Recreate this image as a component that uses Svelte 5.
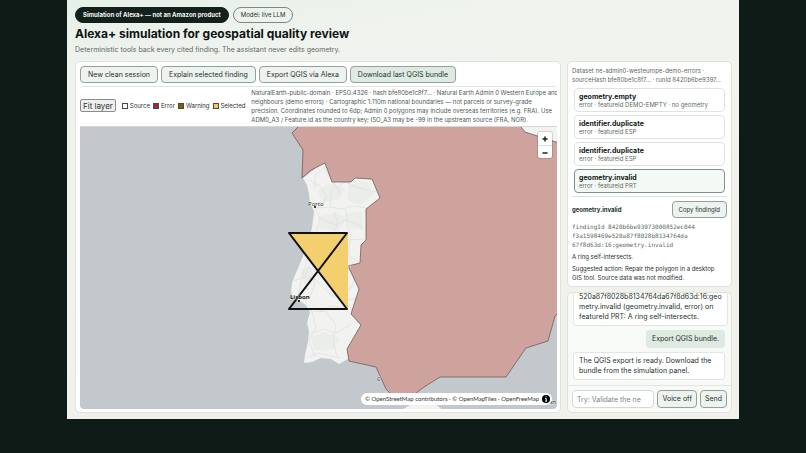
<script>
  const legend = [
    { name: 'Source', color: '#ffffff' },
    { name: 'Error', color: '#a32638' },
    { name: 'Warning', color: '#8a5a00' },
    { name: 'Selected', color: '#f2cc55' }
  ];

  const findings = [
    { rule: 'geometry.empty', detail: 'error · featureId DEMO-EMPTY · no geometry' },
    { rule: 'identifier.duplicate', detail: 'error · featureId ESP' },
    { rule: 'identifier.duplicate', detail: 'error · featureId ESP' },
    { rule: 'geometry.invalid', detail: 'error · featureId PRT' }
  ];

  let selected = $state(3);
  let voice = $state(false);
  let message = $state('');
</script>

<div class="page">
  <header>
    <div class="badges">
      <span class="badge dark">Simulation of Alexa+ — not an Amazon product</span>
      <span class="badge">Model: live LLM</span>
    </div>
    <h1>Alexa+ simulation for geospatial quality review</h1>
    <p>Deterministic tools back every cited finding. The assistant never edits geometry.</p>
  </header>

  <main>
    <section class="panel workspace">
      <div class="toolbar">
        <button class="btn">New clean session</button>
        <button class="btn">Explain selected finding</button>
        <button class="btn">Export QGIS via Alexa</button>
        <button class="btn primary">Download last QGIS bundle</button>
      </div>

      <div class="map-card">
        <div class="map-head">
          <button class="fit">Fit layer</button>
          <div class="legend">
            {#each legend as item}
              <span><i style="background: {item.color}"></i>{item.name}</span>
            {/each}
          </div>
          <p>
            NaturalEarth-public-domain · EPSG:4326 · hash bfe80be1c8f7… · Natural Earth Admin 0 Western Europe and<br />
            neighbours (demo errors) · Cartographic 1:110m national boundaries — not parcels or survey-grade<br />
            precision. Coordinates rounded to 6dp; Admin 0 polygons may include overseas territories (e.g. FRA). Use<br />
            ADM0_A3 / Feature.id as the country key; ISO_A3 may be -99 in the upstream source (FRA, NOR).
          </p>
        </div>

        <div class="map">
          <svg viewBox="80 126 477 282" preserveAspectRatio="xMidYMid slice" aria-label="Map of Portugal and Spain">
            <rect x="-300" y="-300" width="1400" height="1200" fill="#c2c8cb" />
            <!-- land under the layer -->
            <path
              class="land"
              d="M303 177L307 184L309 193L310 202L314 210L313 219L312 226L310 235L306 246L303 255L299 265L295 274L292 282L291 291L294 298L299 299L306 304L310 311L307 322L309 330L308 341L305 354L304 362L312 361L321 357L331 358L339 363L346 359L350 357L365 330L400 290L400 160L340 150L324 161Z"
            />
            <path class="land" d="M520 120V126L530 136L564 146V120Z" />
            <path class="land" d="M397 412L410 404L424 400L431 400L438 405L446 412Z" />
            <g class="terrain">
              <path d="M318 190L332 181L345 188L339 198L322 202Z" />
              <path d="M349 184L366 180L374 193L360 205L347 199Z" />
              <path d="M319 216L336 211L347 218L338 230L320 228Z" />
              <path d="M345 213L362 210L363 229L349 226Z" />
              <path d="M311 337L323 331L340 337L335 348L314 350Z" />
              <path d="M300 272L310 263L315 276L306 286Z" />
            </g>
            <g class="roads">
              <path d="M309 179L320 185L327 196L322 205L315 207L320 217L317 229L312 246L306 263L301 280L298 297" />
              <path d="M315 207L330 206L342 208L353 205L367 207M330 206L331 190L345 181L359 187L376 191" />
              <path d="M320 217L335 224L346 219L363 226M346 208L347 225L351 234L348 253L359 262" />
              <path d="M294 280L304 276L316 279L331 294L344 300L357 297M304 276L310 262" />
              <path d="M300 300L312 311L326 310L336 324L333 340L337 355M312 311L316 326L309 340L315 356" />
              <path d="M319 311L331 305L351 307L358 318M309 333L324 328L336 332L350 324M307 357L318 352L340 357" />
              <path d="M348 252L356 270L352 286L341 294M302 268L315 282L310 297M315 188L315 174L322 169" />
              <path d="M312 232L325 232L345 239L365 238M333 233L338 222L334 212M323 166L332 179L341 194" />
            </g>
            <!-- Spain -->
            <path
              class="spain"
              d="M298 126L292 132L303 149L302 177L311 169L325 162L332 181L351 181L355 177L372 178L380 197L366 208L366 239L361 244L360 262L348 265L359 288L351 313L361 324L347 348L349 360L376 366L386 388L402 404L421 388L440 376L506 376L526 347L548 340L555 315L562 308V143L556 141L525 131L521 126V120H298Z"
            />
            <text class="country" x="323" y="268">Portugal</text>
            <text class="place" x="308" y="205">Porto</text>
            <circle cx="315" cy="206" r="1" />
            <text class="place" x="377" y="380">C</text>
            <text class="place" x="549" y="403">an</text>
            <!-- self-crossing ring -->
            <path class="fill" d="M289 232H348V308L318 270Z" />
            <path class="ring" d="M289 232H347L289 308H347Z" />
            <text class="place capital" x="290" y="298">Lisbon</text>
            <circle cx="299" cy="300" r="1" />
          </svg>

          <div class="zoom">
            <button aria-label="Zoom in"><svg viewBox="0 0 14 14"><path d="M7 5V9M5 7H9" /></svg></button>
            <button aria-label="Zoom out"><svg viewBox="0 0 14 14"><path d="M5 7H9" /></svg></button>
          </div>
          <div class="credit">
            <span>© <a href="#osm">OpenStreetMap</a> contributors · © <a href="#omt">OpenMapTiles</a> · <a href="#ofm">OpenFreeMap</a></span>
            <svg viewBox="0 0 8 8" aria-hidden="true">
              <circle cx="4" cy="4" r="4" />
              <path d="M4 1.3V2.3M3.2 3.5H4.2V6M3 6.1H5.2" />
            </svg>
          </div>
        </div>
      </div>
    </section>

    <aside>
      <section class="panel results">
        <p class="meta">Dataset ne-admin0-westeurope-demo-errors ·<br />sourceHash bfe80be1c8f7… · runId 8420b6be9397…</p>
        <div class="findings">
          {#each findings as finding, i}
            <button class="finding" class:active={selected === i} onclick={() => (selected = i)}>
              <strong>{finding.rule}</strong>
              <span>{finding.detail}</span>
            </button>
          {/each}
        </div>
        <div class="detail">
          <div class="detail-head">
            <h2>geometry.invalid</h2>
            <button class="btn small">Copy findingId</button>
          </div>
          <code>findingId 8420b6be93973000852ec044<br />f3a1598469e520a87f8028b8134764da<br />67f8d63d:16:geometry.invalid</code>
          <p>A ring self-intersects.</p>
          <p>Suggested action: Repair the polygon in a desktop<br />GIS tool. Source data was not modified.</p>
        </div>
      </section>

      <section class="panel chat">
        <div class="log">
          <div class="msg wide">520a87f8028b8134764da67f8d63d:16:geo<br />metry.invalid (geometry.invalid, error) on<br />featureId PRT: A ring self-intersects.</div>
          <div class="msg user">Export QGIS bundle.</div>
          <div class="msg">The QGIS export is ready. Download the bundle from the simulation panel.</div>
        </div>
        <form onsubmit={e => e.preventDefault()}>
          <input aria-label="Message" placeholder="Try: Validate the ne" bind:value={message} />
          <button type="button" class="btn" onclick={() => (voice = !voice)}>{voice ? 'Voice on' : 'Voice off'}</button>
          <button class="btn">Send</button>
        </form>
      </section>
    </aside>
  </main>
</div>

<style>
  :global(body) {
    margin: 0;
    background: #0e1b17;
  }
  * {
    box-sizing: border-box;
  }
  .page {
    display: flex;
    flex-direction: column;
    height: calc(100vh - 34px);
    margin: 0 67px;
    padding: 7px 7px 7px 8px;
    background: linear-gradient(170deg, #e7efe9 0, #f1f4ee 90px, #f1f0ea 100%);
    color: #26322d;
    font: 7px/10px Inter, 'Liberation Sans', sans-serif;
  }
  h1,
  h2,
  p {
    margin: 0;
  }
  button,
  input {
    font: inherit;
    color: inherit;
    margin: 0;
  }
  button {
    cursor: pointer;
  }
  .badges {
    display: flex;
    gap: 4px;
  }
  .badge {
    padding: 2px 7px;
    border: 1px solid #7d8983;
    border-radius: 8px;
    font-size: 6px;
  }
  .badge.dark {
    background: #14201b;
    border-color: #14201b;
    color: #f4f7f5;
    font-weight: 700;
  }
  h1 {
    margin-top: 3px;
    font-size: 12px;
    line-height: 16px;
    color: #0c1512;
  }
  header p {
    margin: 3px 0 6px;
    color: #5d6963;
  }
  main {
    flex: 1;
    min-height: 0;
    display: grid;
    grid-template-columns: minmax(0, 1fr) 165px;
    gap: 6px;
  }
  .panel {
    background: #fff;
    border: 1px solid #dfe3df;
    border-radius: 5px;
  }
  .workspace {
    display: flex;
    flex-direction: column;
    gap: 3px;
    padding: 4px 3px 3px 4px;
  }
  .toolbar {
    display: flex;
    gap: 3px;
  }
  .btn {
    height: 17px;
    padding: 0 7px;
    border: 1px solid #93a199;
    border-radius: 4px;
    background: #edf3ef;
    white-space: nowrap;
  }
  .btn.primary {
    background: #dfeae3;
  }
  .btn.small {
    padding: 0 6px;
    font-size: 6px;
  }
  .map-card {
    flex: 1;
    min-height: 0;
    display: flex;
    flex-direction: column;
    border-top: 1px solid #e1e4e2;
    border-radius: 4px;
    overflow: hidden;
  }
  .map-head {
    display: flex;
    align-items: center;
    gap: 6px;
    height: 39px;
    padding-bottom: 2px;
  }
  .fit {
    height: 13px;
    padding: 0 2px;
    border: 1px solid #8c8c8c;
    border-radius: 2px;
    background: #f0f0f0;
    font-size: 8px;
    line-height: 10px;
    white-space: nowrap;
  }
  .legend {
    display: flex;
    gap: 3px;
    font-size: 6px;
  }
  .legend span {
    display: flex;
    align-items: center;
    gap: 2px;
  }
  .legend i {
    width: 6px;
    height: 6px;
    border: 1px solid #444c48;
  }
  .map-head p {
    font-size: 6px;
    line-height: 9px;
    white-space: nowrap;
    color: #4d5853;
  }
  .map {
    position: relative;
    flex: 1;
    min-height: 0;
    border-top: 1px solid #d5d9d6;
  }
  .map > svg {
    display: block;
    width: 100%;
    height: 100%;
  }
  .land {
    fill: #f2f3f1;
  }
  .terrain {
    fill: #ebedeb;
  }
  .roads {
    fill: none;
    stroke: #dcdfdd;
    stroke-width: 0.7;
  }
  .spain {
    fill: #cfa39d;
    stroke: #6e5d59;
    stroke-width: 0.8;
  }
  .fill {
    fill: #f4cf6d;
  }
  .ring {
    fill: none;
    stroke: #111;
    stroke-width: 2;
    stroke-linejoin: round;
  }
  .place {
    font: 6px 'Noto Sans', sans-serif;
    fill: #333;
    stroke: #fff8;
    stroke-width: 1px;
    paint-order: stroke;
  }
  .capital {
    font-weight: 700;
    fill: #111;
  }
  .country {
    font: 7px 'Noto Sans', sans-serif;
    fill: #d5d0c0;
  }
  .zoom {
    position: absolute;
    top: 5px;
    right: 5px;
    display: grid;
    border-radius: 2px;
    background: #fff;
    box-shadow: 0 0 0 1px #0002;
  }
  .zoom button {
    width: 14px;
    height: 13px;
    padding: 0;
    border: 0;
    background: none;
  }
  .zoom button + button {
    border-top: 1px solid #ddd;
  }
  .zoom svg {
    display: block;
    stroke: #222;
    stroke-width: 1.5;
    stroke-linecap: round;
  }
  .credit {
    position: absolute;
    right: 5px;
    bottom: 4px;
    display: flex;
    align-items: center;
    gap: 3px;
    padding: 1px 2px 1px 4px;
    border-radius: 6px;
    background: #fff;
    font: 6px/10px Lato, 'Liberation Sans', sans-serif;
    color: #333;
  }
  .credit a {
    color: inherit;
    text-decoration: none;
  }
  .credit svg {
    width: 8px;
    height: 8px;
  }
  .credit path {
    fill: none;
    stroke: #fff;
  }
  aside {
    min-height: 0;
    display: flex;
    flex-direction: column;
    gap: 5px;
  }
  .results {
    padding: 4px;
  }
  .meta {
    font-size: 6px;
    line-height: 9px;
    color: #5d6963;
    white-space: nowrap;
  }
  .findings {
    display: grid;
    gap: 3px;
    padding: 4px 2px 3px;
    border-bottom: 1px solid #dfe3df;
  }
  .finding {
    height: 24px;
    padding: 2px 4px;
    border: 1px solid #dfe3df;
    border-radius: 4px;
    background: #fff;
    text-align: left;
  }
  .finding.active {
    border-color: #7d9488;
    background: #f5f9f6;
  }
  .finding strong,
  .finding span {
    display: block;
  }
  .finding strong {
    line-height: 9px;
    color: #111a16;
  }
  .finding span {
    font-size: 6px;
    line-height: 7px;
    color: #5d6963;
  }
  .detail {
    padding-top: 4px;
  }
  .detail-head {
    display: flex;
    align-items: center;
    justify-content: space-between;
  }
  h2 {
    font-size: 6px;
  }
  .detail code {
    display: block;
    margin-top: 4px;
    font: 6px/9px 'DejaVu Sans Mono', monospace;
    color: #5d6963;
  }
  .detail p {
    margin-top: 3px;
    font-size: 6px;
    line-height: 9px;
  }
  .chat {
    flex: 1;
    min-height: 0;
    display: flex;
    flex-direction: column;
    overflow: hidden;
    background: #f8faf8;
  }
  .log {
    flex: 1;
    min-height: 0;
    display: flex;
    flex-direction: column;
    justify-content: flex-end;
    align-items: flex-start;
    gap: 4px;
    padding: 0 5px 5px;
    overflow: hidden;
  }
  .msg {
    flex: none;
    padding: 3px 5px;
    border: 1px solid #e3e7e4;
    border-radius: 3px;
    background: #fff;
    margin-right: 1px;
  }
  .msg.user {
    align-self: flex-end;
    background: #dfeae3;
    border-color: #dfeae3;
  }
  .msg.wide {
    align-self: stretch;
    margin-right: -2px;
    white-space: nowrap;
  }
  form {
    display: flex;
    gap: 3px;
    padding: 4px;
    border-top: 1px solid #e3e7e4;
  }
  form .btn,
  input {
    height: 18px;
  }
  form .btn {
    padding: 0 4px;
  }
  input {
    flex: 1;
    min-width: 0;
    padding: 0 4px;
    border: 1px solid #d5dad7;
    border-radius: 4px;
    background: #fff;
  }
  input::placeholder {
    color: #7c8580;
  }
</style>
